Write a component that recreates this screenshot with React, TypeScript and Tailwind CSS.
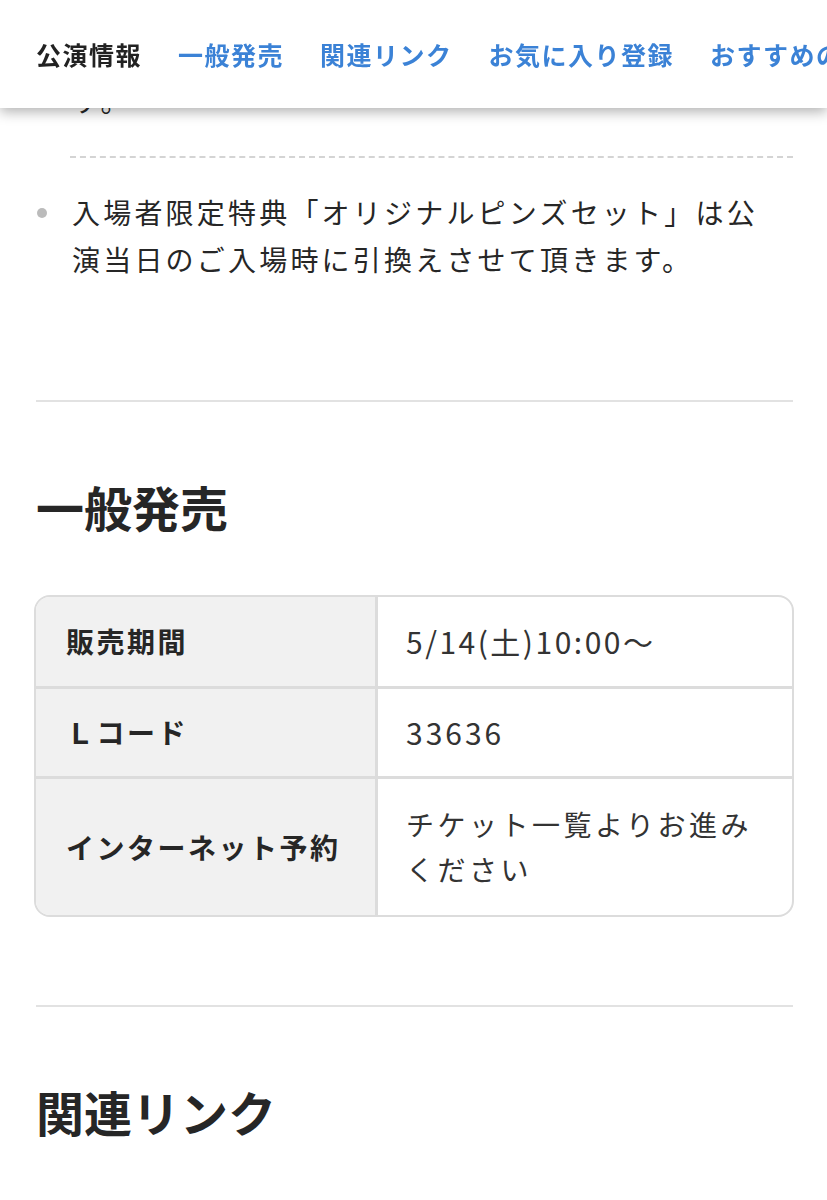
import React from "react";

const font = { fontFamily: '"Noto Sans CJK JP", "Noto Sans", sans-serif' };

export default function App() {
  return (
    <div className="relative w-[827px] min-h-[1200px] bg-white text-[#262626] overflow-hidden" style={font}>
      <header className="fixed top-0 left-0 right-0 z-10 h-[108px] bg-white shadow-[0_4px_12px_rgba(0,0,0,0.3)] flex items-center pl-[36px] overflow-hidden">
        <nav className="flex gap-[36px] whitespace-nowrap text-[25px] font-bold tracking-[1.5px] leading-none">
          <span className="text-[#222]">公演情報</span>
          <span className="text-[#3b82d6]">一般発売</span>
          <span className="text-[#3b82d6]">関連リンク</span>
          <span className="text-[#3b82d6]">お気に入り登録</span>
          <span className="text-[#3b82d6]">おすすめの公演</span>
        </nav>
      </header>

      <main className="pl-[36px] pr-[34px] pt-[30px]">
        <ul className="text-[28px] leading-[47px] tracking-[3.2px]">
          <li className="flex pb-[32px]">
            <span className="mt-[19px] mr-[25px] ml-[1px] h-[10px] w-[10px] shrink-0 rounded-full bg-[#bbbbbb]" />
            <p>
              公演内容は予告なく変更となる場合がございま
              <br />
              す。
            </p>
          </li>
          <li className="ml-[34px] border-t-2 border-dashed border-[#d4d4d4]" />
          <li className="flex pt-[31px]">
            <span className="mt-[19px] mr-[25px] ml-[1px] h-[10px] w-[10px] shrink-0 rounded-full bg-[#bbbbbb]" />
            <p>
              入場者限定特典「オリジナルピンズセット」は公
              <br />
              演当日のご入場時に引換えさせて頂きます。
            </p>
          </li>
        </ul>

        <div className="mt-[117px] h-[2px] bg-[#e2e2e2]" />

        <h2 className="mt-[74px] text-[48px] leading-[60px] font-bold">一般発売</h2>

        <div className="mt-[59px] -ml-[2px] w-[760px] rounded-[16px] border-2 border-[#dcdcdc] overflow-hidden text-[28px] leading-[45px]">
          <div className="flex">
            <div className="w-[342px] shrink-0 bg-[#f1f1f1] border-r-[3px] border-[#dcdcdc] pl-[30px] flex items-center font-bold tracking-[2.5px] py-[22px]">
              販売期間
            </div>
            <div className="pl-[28px] py-[22px] text-[30px] tracking-[2.5px] text-[#333]">5/14(土)10:00〜</div>
          </div>
          <div className="flex border-t-[3px] border-[#dcdcdc]">
            <div className="w-[342px] shrink-0 bg-[#f1f1f1] border-r-[3px] border-[#dcdcdc] pl-[30px] flex items-center font-bold tracking-[2.5px] py-[21px]">
              Ｌコード
            </div>
            <div className="pl-[28px] py-[21px] text-[30px] tracking-[3px] text-[#333]">33636</div>
          </div>
          <div className="flex border-t-[3px] border-[#dcdcdc]">
            <div className="w-[342px] shrink-0 bg-[#f1f1f1] border-r-[3px] border-[#dcdcdc] pl-[30px] flex items-center font-bold tracking-[2.5px] py-[23px]">
              インターネット予約
            </div>
            <div className="pl-[28px] py-[23px] tracking-[3.5px] text-[#333]">
              チケット一覧よりお進み
              <br />
              ください
            </div>
          </div>
        </div>

        <div className="mt-[88px] h-[2px] bg-[#e2e2e2]" />

        <h2 className="mt-[74px] text-[48px] leading-[60px] font-bold">関連リンク</h2>
        <div className="h-[200px]" />
      </main>
    </div>
  );
}
